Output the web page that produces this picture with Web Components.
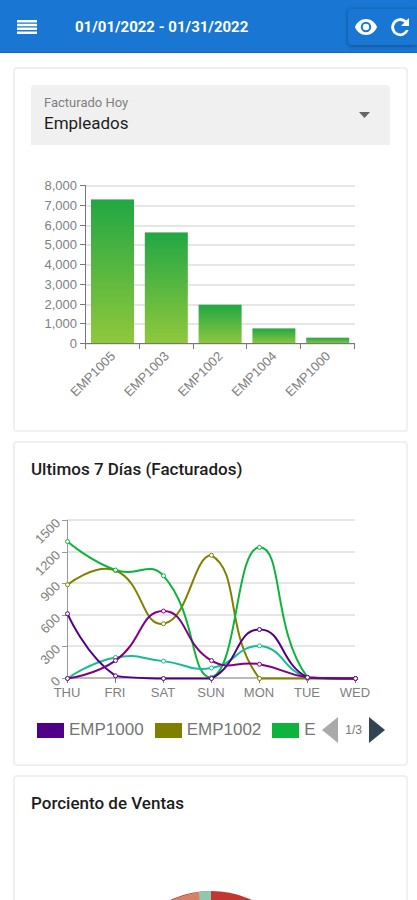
<!DOCTYPE html>
<html lang="es">
<head>
<meta charset="utf-8">
<meta name="viewport" content="width=device-width, initial-scale=1">
<title>Dashboard</title>
<style>
body { margin: 0; background: #fff; color: #1d1d1d; font-family: Roboto, "Liberation Sans", sans-serif; }
html { overflow-x: hidden; }
</style>
</head>
<body>
<dash-app></dash-app>
<script>
const define = (name, html, setup) => {
  const tpl = document.createElement('template');
  tpl.innerHTML = html;
  customElements.define(name, class extends HTMLElement {
    connectedCallback() {
      if (this.shadowRoot) return;
      const root = this.attachShadow({ mode: 'open' });
      root.append(tpl.content.cloneNode(true));
      if (setup) setup(root, this);
    }
  });
};

/* Top bar */
define('app-bar', `
<style>
:host { display: flex; align-items: center; height: 53px; background: #1976d2; color: #fff; border-bottom: 1px solid #1565b8; box-sizing: border-box; padding: 2px 0 0 16px; }
button { display: flex; background: none; border: 0; padding: 0; color: inherit; }
svg { display: block; fill: currentColor; }
time { flex: 1; margin-left: 37px; font-size: 15px; line-height: 20px; font-weight: 700; white-space: nowrap; }
.group { display: flex; align-items: center; gap: 10px; height: 36px; padding: 0 5px 0 6px; border-radius: 4px 0 0 4px; box-shadow: 0 1px 4px rgba(0,0,0,.35); }
</style>
<button aria-label="Menu"><svg width="22" height="16" viewBox="0 0 22 16"><path d="M1 1h20v2.500H1zM1 4.800h20v2.500H1zM1 8.600h20v2.500H1zM1 12.400h20v2.500H1z"/></svg></button>
<time>01/01/2022 - 01/31/2022</time>
<div class="group">
<button aria-label="Ver"><svg width="24" height="24" viewBox="0 0 24 24"><path d="M12 4C7 4 2.700 7.300 1 12c1.700 4.700 6 8 11 8s9.300-3.300 11-8c-1.700-4.700-6-8-11-8zm0 13.200a5.200 5.200 0 1 1 0-10.400 5.200 5.200 0 0 1 0 10.400zm0-8.400a3.200 3.200 0 1 0 0 6.400 3.200 3.200 0 0 0 0-6.400z"/></svg></button>
<button aria-label="Actualizar"><svg width="24" height="24" viewBox="0 0 24 24"><path d="M18.400 5.600A9 9 0 1 0 20.700 15h-2.900a6.200 6.200 0 1 1-1.400-7.400L13 11h8V3z"/></svg></button>
</div>`);

/* Bordered card with an optional heading */
define('dash-card', `
<style>
:host { display: block; border: 2px solid #f0f0f0; border-radius: 4px; padding: 16px; background: #fff; }
h2 { margin: 0; font-size: 17px; line-height: 20px; font-weight: 500; color: #1d1d1d; }
</style>
<h2></h2><slot></slot>`, (root, host) => {
  const h = root.querySelector('h2'), t = host.getAttribute('heading');
  if (t) h.textContent = t; else h.remove();
});

/* Filled drop-down */
define('filled-select', `
<style>
:host { display: grid; background: #f0f0f0; border-radius: 4px 4px 0 0; height: 60px; align-items: center; }
label { grid-area: 1/1; align-self: start; padding: 10px 13px 0; font-size: 13px; line-height: 16px; color: #808080; }
select { grid-area: 1/1; width: 100%; height: 60px; appearance: none; border: 0; background: none; padding: 16px 40px 0 13px; font: 17px/20px Roboto, sans-serif; color: #1d1d1d; }
svg { grid-area: 1/1; justify-self: end; margin-right: 20px; fill: #666; pointer-events: none; }
</style>
<label for="s">Facturado Hoy</label>
<select id="s"><option>Empleados</option></select>
<svg width="11" height="6" viewBox="0 0 11 6"><path d="M0 0h11L5.500 6z"/></svg>`);

const chartStyle = `<style>
:host { display: block; }
svg { display: block; width: 100%; height: auto; font-family: "Liberation Sans", Arial, sans-serif; font-size: 13px; }
text { fill: #808080; }
</style>`;

/* Bars of today's billing by employee */
define('bar-chart', chartStyle + '<svg viewBox="0 0 359 269" role="img" aria-label="Facturado hoy por empleado"></svg>', root => {
  const L = 55, R = 324, T = 41, B = 199, max = 8000;
  const data = [['EMP1005', 7320], ['EMP1003', 5650], ['EMP1002', 1990], ['EMP1004', 790], ['EMP1000', 320]];
  const y = v => B - (B - T) * v / max, band = (R - L) / data.length;
  let s = '<defs><linearGradient id="g" x1="0" y1="0" x2="0" y2="1"><stop stop-color="#22a744"/><stop offset="1" stop-color="#90c83c"/></linearGradient></defs>';
  for (let v = 0; v <= max; v += 1000) {
    const p = Math.round(y(v));
    s += `<path d="M${L} ${p}H${R}" stroke="#e6e6e6" stroke-width="2"/><path d="M${L - 6} ${p - 0.5}H${L}" stroke="#777"/><text x="${L - 9}" y="${p + 4}" text-anchor="end">${v.toLocaleString('en-US')}</text>`;
  }
  data.forEach(([n, v], i) => {
    const x = L + band * i;
    s += `<rect x="${x + 5}" y="${y(v)}" width="43" height="${B - y(v)}" fill="url(#g)"/>`;
    s += `<text transform="translate(${x + 30} ${B + 13}) rotate(-45)" text-anchor="end">${n}</text>`;
  });
  for (let i = 0; i <= data.length; i++) s += `<path d="M${Math.round(L + band * i) - 0.5} ${B}v5" stroke="#777"/>`;
  s += `<path d="M${L - 0.5} ${T}V${B - 0.5}H${R}" fill="none" stroke="#777"/>`;
  root.querySelector('svg').innerHTML = s;
});

/* Smoothed lines of the last seven days */
define('line-chart', chartStyle + '<svg viewBox="0 0 359 212" role="img" aria-label="Facturados en los ultimos 7 días"></svg>', root => {
  const L = 36, S = 48, T = 30, B = 188, max = 1500;
  const y = v => B - (B - T) * v / max;
  const days = ['THU', 'FRI', 'SAT', 'SUN', 'MON', 'TUE', 'WED'];
  const series = [
    ['#808000', [890, 1025, 520, 1170, 0, 0, 0]],
    ['#0cb43c', [1300, 1030, 975, 10, 1245, 10, 0]],
    ['#18bc94', [0, 200, 165, 100, 310, 5, 0]],
    ['#500088', [615, 25, 0, 0, 465, 10, 0]],
    ['#800080', [0, 170, 640, 170, 135, 10, 0]]
  ];
  let s = '';
  for (let v = 0; v <= max; v += 300) {
    const p = Math.round(y(v));
    s += `<path d="M${L} ${p}H324" stroke="${v ? '#e6e6e6' : '#bbb'}" stroke-width="2"/><path d="M${L - 5} ${p + 0.5}h5" stroke="#999"/><text transform="translate(${L - 6} ${p + 4}) rotate(-45)" text-anchor="end">${v}</text>`;
  }
  s += `<path d="M${L + 0.5} ${T}V${B}" stroke="#999"/>`;
  days.forEach((d, i) => {
    s += `<path d="M${L + S * i + 0.5} ${B}v5" stroke="#777"/><text x="${L + S * i}" y="${B + 19}" text-anchor="middle">${d}</text>`;
  });
  const curve = pts => {
    const ys = pts.map(p => p[1]), lo = Math.min(...ys), hi = Math.max(...ys);
    const clamp = v => Math.max(lo, Math.min(hi, v));
    let d = `M${pts[0]}`, cp = pts[0];
    for (let i = 1; i < pts.length; i++) {
      const p = pts[i], a = pts[i - 1], n = pts[i + 1];
      let c1 = p, next = p;
      if (n) {
        const la = Math.hypot(p[0] - a[0], p[1] - a[1]), ln = Math.hypot(n[0] - p[0], n[1] - p[1]), r = ln / (la + ln);
        const vx = (n[0] - a[0]) / 2, vy = (n[1] - a[1]) / 2;
        c1 = [p[0] - vx * (1 - r), clamp(p[1] - vy * (1 - r))];
        next = [p[0] + vx * r, clamp(p[1] + vy * r)];
      }
      d += `C${cp} ${c1} ${p}`;
      cp = next;
    }
    return d;
  };
  for (const [c, vals] of series) {
    const pts = vals.map((v, i) => [L + S * i + 0.5, y(v) + 0.5]);
    s += `<path d="${curve(pts)}" fill="none" stroke="${c}" stroke-width="2"/>`;
    for (const p of pts) s += `<circle cx="${p[0]}" cy="${p[1]}" r="2" fill="#fff" stroke="${c}"/>`;
  }
  root.querySelector('svg').innerHTML = s;
});

/* Paged legend */
define('chart-legend', `
<style>
:host { display: flex; align-items: center; height: 26px; padding: 0 5px 0 6px; color: #757575; font-family: "Liberation Sans", Arial, sans-serif; }
ul { display: flex; gap: 11px; flex: 1; min-width: 0; overflow: hidden; margin: 0; padding: 0; list-style: none; }
li { display: flex; flex: none; align-items: center; gap: 5px; font-size: 17px; line-height: 22px; }
i { width: 27px; height: 15px; background: var(--c); }
nav { display: flex; align-items: center; gap: 7px; font-size: 12px; line-height: 16px; }
button { display: flex; border: 0; background: none; padding: 0; }
</style>
<ul>
<li style="--c:#500088"><i></i>EMP1000</li>
<li style="--c:#808000"><i></i>EMP1002</li>
<li style="--c:#0cb43c"><i></i>E</li>
</ul>
<nav>
<button aria-label="Anterior" disabled><svg width="16" height="26" viewBox="0 0 16 26"><path d="M16 0v26L0 13z" fill="#aaa"/></svg></button>
<span>1/3</span>
<button aria-label="Siguiente"><svg width="16" height="26" viewBox="0 0 16 26"><path d="M0 0v26l16-13z" fill="#2f4554"/></svg></button>
</nav>`);

/* Share of sales */
define('pie-chart', chartStyle + `
<svg viewBox="0 0 359 260" role="img" aria-label="Porciento de ventas">
<circle cx="180" cy="174" r="96" fill="#c23531"/>
<path d="M180 174V270A96 96 0 0 1 168 79z" fill="#d48265"/>
<path d="M180 174L167.500 78.800A96 96 0 0 1 180 78z" fill="#91c7ae"/>
</svg>`);

define('dash-app', `
<style>
:host { display: block; height: 100vh; overflow: hidden; }
main { display: grid; gap: 9px; padding: 14px 9px 0 13px; }
line-chart { margin-top: 11px; }
chart-legend { margin: 15px 0 5px; }
dash-card { min-width: 0; }
</style>
<app-bar></app-bar>
<main>
<dash-card><filled-select></filled-select><bar-chart></bar-chart></dash-card>
<dash-card heading="Ultimos 7 Días (Facturados)"><line-chart></line-chart><chart-legend></chart-legend></dash-card>
<dash-card heading="Porciento de Ventas"><pie-chart></pie-chart></dash-card>
</main>`);
</script>
</body>
</html>
